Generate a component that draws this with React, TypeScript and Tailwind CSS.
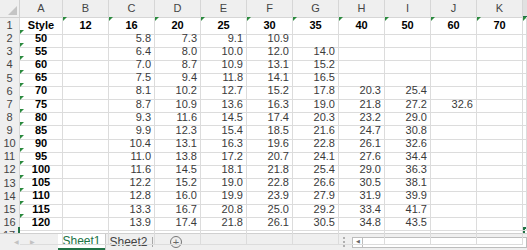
import React from 'react';

const LETTERS = ['A', 'B', 'C', 'D', 'E', 'F', 'G', 'H', 'I', 'J', 'K'];
const SIZES = ['12', '16', '20', '25', '30', '35', '40', '50', '60', '70'];

// style -> values for columns B..K
const ROWS: [string, string[]][] = [
  ['50', ['', '5.8', '7.3', '9.1', '10.9']],
  ['55', ['', '6.4', '8.0', '10.0', '12.0', '14.0']],
  ['60', ['', '7.0', '8.7', '10.9', '13.1', '15.2']],
  ['65', ['', '7.5', '9.4', '11.8', '14.1', '16.5']],
  ['70', ['', '8.1', '10.2', '12.7', '15.2', '17.8', '20.3', '25.4']],
  ['75', ['', '8.7', '10.9', '13.6', '16.3', '19.0', '21.8', '27.2', '32.6']],
  ['80', ['', '9.3', '11.6', '14.5', '17.4', '20.3', '23.2', '29.0']],
  ['85', ['', '9.9', '12.3', '15.4', '18.5', '21.6', '24.7', '30.8']],
  ['90', ['', '10.4', '13.1', '16.3', '19.6', '22.8', '26.1', '32.6']],
  ['95', ['', '11.0', '13.8', '17.2', '20.7', '24.1', '27.6', '34.4']],
  ['100', ['', '11.6', '14.5', '18.1', '21.8', '25.4', '29.0', '36.3']],
  ['105', ['', '12.2', '15.2', '19.0', '22.8', '26.6', '30.5', '38.1']],
  ['110', ['', '12.8', '16.0', '19.9', '23.9', '27.9', '31.9', '39.9']],
  ['115', ['', '13.3', '16.7', '20.8', '25.0', '29.2', '33.4', '41.7']],
  ['120', ['', '13.9', '17.4', '21.8', '26.1', '30.5', '34.8', '43.5']],
];

const grid = 'grid grid-cols-[20px_43px_repeat(10,46px)_1fr]';

function Flag() {
  // green "number stored as text" marker
  return (
    <span className="absolute left-0 top-0 w-0 h-0 border-t-[4px] border-r-[4px] border-t-[#2b8a3e] border-r-transparent" />
  );
}

function RowHead({ n, active }: { n: number; active?: boolean }) {
  return (
    <div
      className={`flex items-center justify-center bg-[#efefef] text-[#444] text-[11px] border-b border-[#d6d6d6] ${
        active ? 'border-r-2 border-r-[#217346] bg-[#e1e1e1]' : 'border-r border-r-[#d6d6d6]'
      }`}
    >
      {n}
    </div>
  );
}

function Cell({ children, flag, bold, right }: { children?: React.ReactNode; flag?: boolean; bold?: boolean; right?: boolean }) {
  return (
    <div
      className={`relative flex items-center border-r border-b border-[#dcdcdc] text-[11px] leading-none overflow-hidden whitespace-nowrap ${
        bold ? 'font-bold text-black justify-center' : 'text-[#3a3a3a]'
      } ${right ? 'justify-end pr-[3px]' : ''}`}
    >
      {flag && <Flag />}
      {children}
    </div>
  );
}

export default function App() {
  return (
    <div
      className="w-[527px] h-[250px] overflow-hidden bg-white flex flex-col select-none"
      style={{ fontFamily: '"Liberation Sans", Arial, sans-serif' }}
    >
      {/* column headers */}
      <div className={`${grid} h-[17px] shrink-0`}>
        <div className="relative bg-[#efefef] border-r border-b border-[#d0d0d0]">
          <svg className="absolute right-[2px] bottom-[2px]" width="9" height="9" viewBox="0 0 9 9">
            <polygon points="9,0 9,9 0,9" fill="#c4c4c4" />
          </svg>
        </div>
        {LETTERS.map((l) => (
          <div
            key={l}
            className="flex items-center justify-center bg-[#efefef] text-[#444] text-[11px] border-r border-b border-[#d6d6d6]"
          >
            {l}
          </div>
        ))}
        <div className="bg-[#e1e1e1] border-b-2 border-[#217346]" />
      </div>

      {/* row 1 */}
      <div className={`${grid} h-[13.125px] shrink-0`}>
        <RowHead n={1} />
        <Cell bold>Style</Cell>
        {SIZES.map((s) => (
          <Cell key={s} bold flag>
            {s}
          </Cell>
        ))}
        <Cell flag />
      </div>

      {ROWS.map(([style, vals], i) => (
        <div key={style} className={`${grid} h-[13.125px] shrink-0`}>
          <RowHead n={i + 2} />
          <Cell bold flag>
            {style}
          </Cell>
          {SIZES.map((_, j) => (
            <Cell key={j} right>
              {vals[j] ?? ''}
            </Cell>
          ))}
          <Cell />
        </div>
      ))}

      {/* row 17, cut off */}
      <div className={`${grid} flex-1 min-h-0`}>
        <RowHead n={17} active />
        {LETTERS.map((l) => (
          <Cell key={l} />
        ))}
        <div className="border-l-2 border-t-2 border-[#217346]" />
      </div>

      {/* sheet tabs */}
      <div className="h-[17px] shrink-0 flex items-center bg-[#efefef] border-t border-[#d0d0d0] text-[11px]">
        <div className="w-[58px] flex items-center gap-[11px] pl-[14px] text-[#c2c2c2] text-[6px]">
          <span>◀</span>
          <span>▶</span>
        </div>
        <div className="h-full w-[47px] bg-white flex items-center justify-center text-[#217346] text-[12px] border-b-2 border-[#217346] shadow-[1px_0_0_#c8c8c8]">
          Sheet1
        </div>
        <div className="h-full w-[47px] flex items-center justify-center text-[#444] text-[12px]">Sheet2</div>
        <div className="w-px h-[10px] bg-[#a8a8a8]" />
        <div className="ml-[17px] w-[12px] h-[12px] rounded-full border border-[#777] flex items-center justify-center text-[#666] text-[11px] leading-none">
          +
        </div>
        <div className="ml-[161px] flex flex-col gap-[2px]">
          <span className="w-[2px] h-[2px] bg-[#b0b0b0]" />
          <span className="w-[2px] h-[2px] bg-[#b0b0b0]" />
          <span className="w-[2px] h-[2px] bg-[#b0b0b0]" />
        </div>
        <div className="ml-[7px] flex-1 h-[11px] bg-white border border-[#bdbdbd] flex items-stretch">
          <div className="w-[10px] border-r border-[#bdbdbd] flex items-center justify-center text-[#666] text-[5px]">◀</div>
        </div>
      </div>
    </div>
  );
}
